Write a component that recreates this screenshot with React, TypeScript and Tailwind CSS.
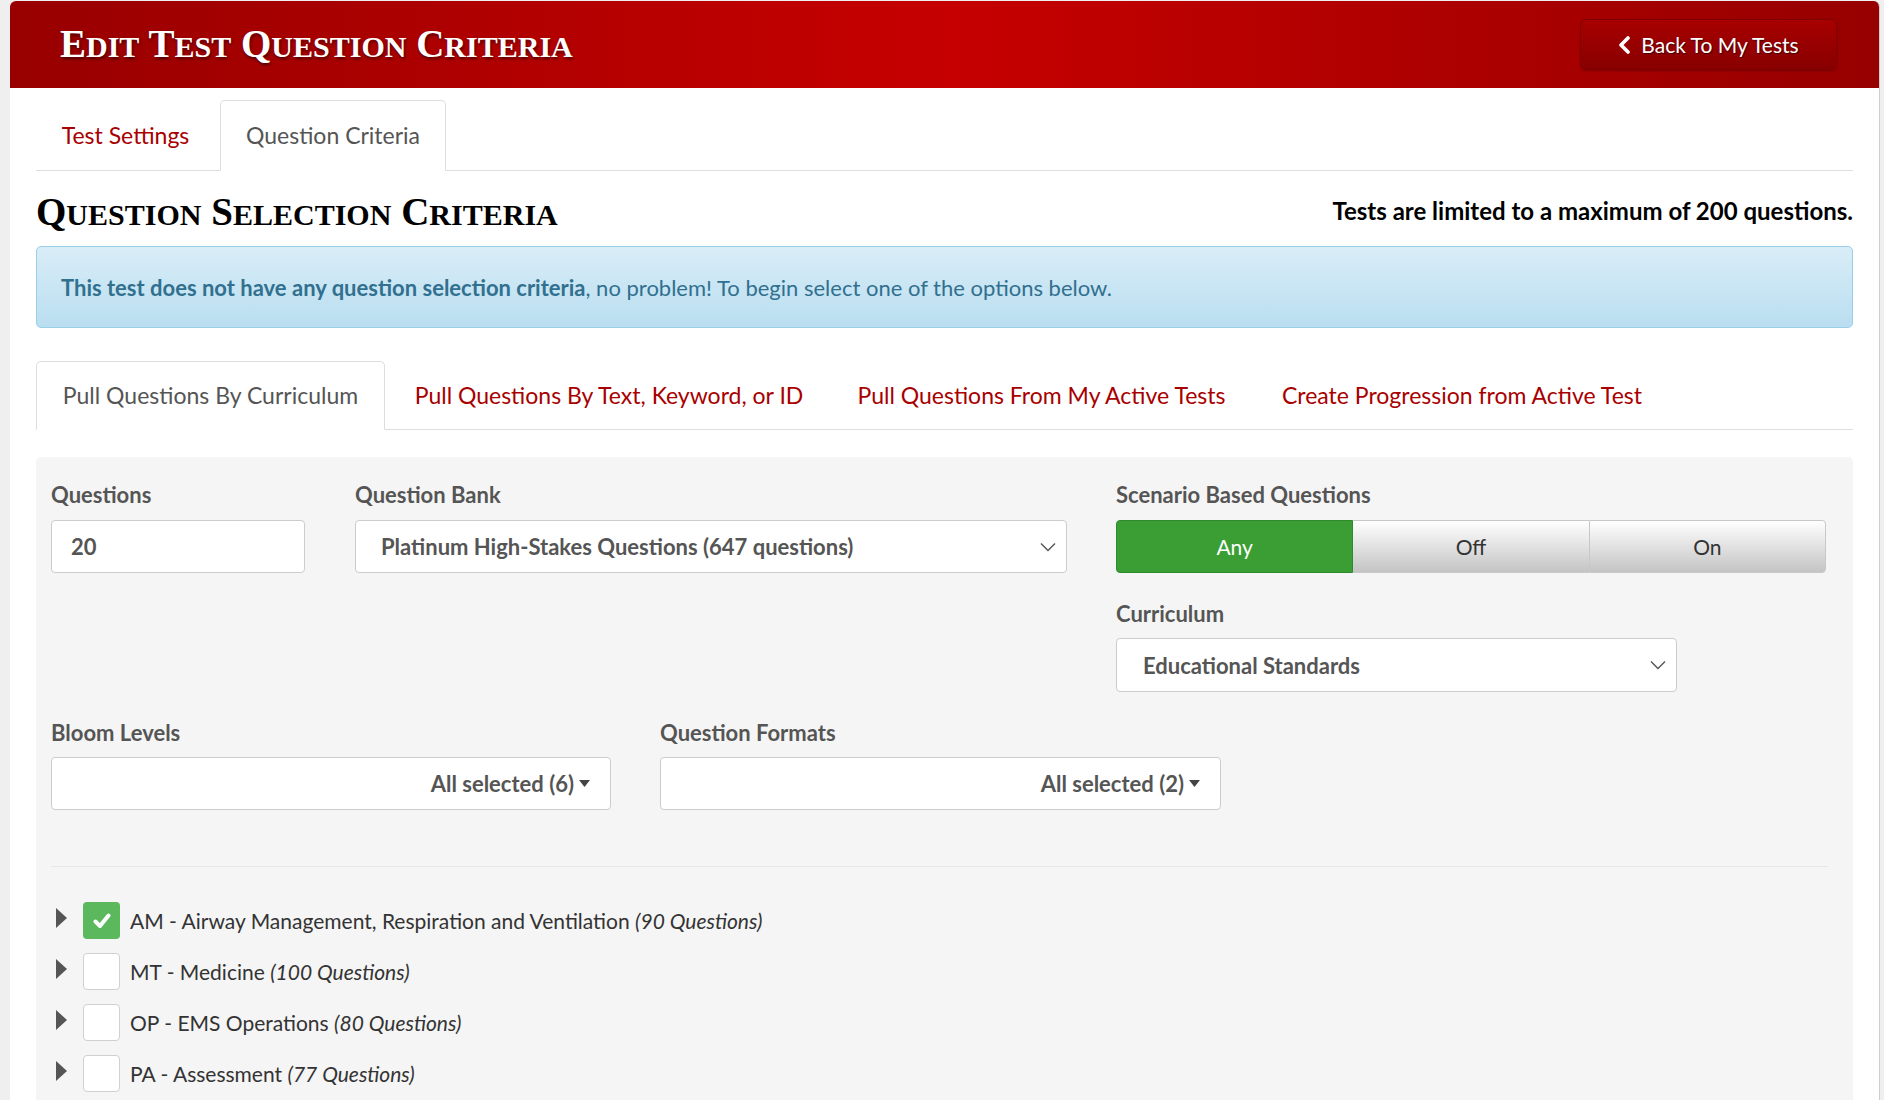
import React from "react";

const SC = ({ text }: { text: string }) => (
  <>
    {text.split(" ").map((w, i) => (
      <React.Fragment key={i}>
        {i > 0 && " "}
        <span>{w[0]}</span>
        <span className="text-[0.77em]">{w.slice(1).toUpperCase()}</span>
      </React.Fragment>
    ))}
  </>
);

const Chevron = () => (
  <svg width="16" height="10" viewBox="0 0 16 10" className="shrink-0">
    <polyline points="1,1.5 8,8.5 15,1.5" fill="none" stroke="#555" strokeWidth="1.4" />
  </svg>
);

const Caret = () => (
  <svg width="11" height="7" viewBox="0 0 11 7" className="ml-[5px] shrink-0">
    <polygon points="0,0 11,0 5.5,7" fill="#444" />
  </svg>
);

const TreeRow = ({ checked, label, count }: { checked: boolean; label: string; count: string }) => (
  <div className="h-[51px] flex items-center">
    <svg width="11" height="20" viewBox="0 0 11 20" className="ml-[5px] -mt-[6px] shrink-0">
      <polygon points="0,0 11,10 0,20" fill="#555" />
    </svg>
    {checked ? (
      <div className="ml-[16px] w-[37px] h-[37px] rounded-[4px] bg-[#5cb85c] flex items-center justify-center shrink-0">
        <svg width="18" height="16" viewBox="0 0 18 16">
          <path d="M2.5 8.5 L7 13 L15.5 2.5" fill="none" stroke="white" strokeWidth="4" strokeLinecap="round" strokeLinejoin="round" />
        </svg>
      </div>
    ) : (
      <div className="ml-[16px] w-[37px] h-[37px] rounded-[4px] bg-white border border-[#d0d0d0] shrink-0" />
    )}
    <span className="ml-[10px] text-[21px] text-[#333]">
      {label} <i>{count}</i>
    </span>
  </div>
);

const Label = ({ children, className = "" }: { children: React.ReactNode; className?: string }) => (
  <div className={"h-[24px] leading-[24px] text-[22px] font-bold text-[#555] " + className}>{children}</div>
);

export default function App() {
  return (
    <div className="h-screen overflow-hidden bg-[#efefef] pl-[10px] pr-[4px] pt-[1px] font-['Lato',sans-serif]">
      <div className="bg-white rounded-t-[6px] border-r border-[#cfcfcf] h-[1099px] overflow-hidden">
        <header className="h-[87px] flex items-center justify-between pl-[50px] pr-[42px] bg-[linear-gradient(90deg,#980000_0%,#c60000_50%,#970000_100%)]">
          <h1 className="font-['Liberation_Serif',serif] font-bold text-[39px] text-white leading-none -mt-[2px] [text-shadow:1px_2px_3px_rgba(0,0,0,0.55)]">
            <SC text="Edit Test Question Criteria" />
          </h1>
          <button className="w-[257px] h-[51px] rounded-[6px] border border-[#800000] bg-[linear-gradient(180deg,#a80000_0%,#880000_100%)] shadow-[0_1px_2px_rgba(0,0,0,0.25)] flex items-center justify-center text-white text-[21px] [text-shadow:1px_1px_1px_rgba(0,0,0,0.6)]">
            <svg width="13" height="18" viewBox="0 0 13 18" className="mr-[10px]">
              <polyline points="10,2 3,9 10,16" fill="none" stroke="white" strokeWidth="3.6" strokeLinecap="round" strokeLinejoin="round" />
            </svg>
            Back To My Tests
          </button>
        </header>

        <div className="mx-[26px]">
          <div className="mt-[13px] h-[70px] flex items-end border-b border-[#ddd] text-[23px]">
            <div className="w-[179px] h-[70px] mr-[5px] flex items-center justify-center text-[#a80000]">Test Settings</div>
            <div className="w-[226px] h-[71px] -mb-px flex items-center justify-center text-[#555] bg-white border border-[#ddd] border-b-white rounded-t-[5px]">Question Criteria</div>
          </div>

          <div className="mt-[15px] h-[50px] flex items-center justify-between">
            <h2 className="font-['Liberation_Serif',serif] font-bold text-[39px] text-black leading-none">
              <SC text="Question Selection Criteria" />
            </h2>
            <div className="font-bold text-[24px] text-black">Tests are limited to a maximum of 200 questions.</div>
          </div>

          <div className="mt-[10px] h-[82px] px-[24px] flex items-center rounded-[5px] border border-[#9acfea] bg-[linear-gradient(180deg,#d9edf7_0%,#b9def0_100%)] text-[#31708f] text-[22px]">
            <span>
              <b>This test does not have any question selection criteria</b>, no problem! To begin select one of the options below.
            </span>
          </div>

          <div className="mt-[34px] h-[68px] flex items-end border-b border-[#ddd] text-[23px]">
            <div className="w-[349px] h-[69px] -mb-px mr-[6px] flex items-center justify-center text-[#555] bg-white border border-[#ddd] border-b-white rounded-t-[5px]">Pull Questions By Curriculum</div>
            <div className="w-[436px] h-[68px] mr-[6px] flex items-center justify-center text-[#a80000]">Pull Questions By Text, Keyword, or ID</div>
            <div className="w-[417px] h-[68px] mr-[6px] flex items-center justify-center text-[#a80000]">Pull Questions From My Active Tests</div>
            <div className="w-[412px] h-[68px] flex items-center justify-center text-[#a80000]">Create Progression from Active Test</div>
          </div>

          <div className="mt-[27px] bg-[#f5f5f5] rounded-t-[5px] pl-[15px] pr-[25px] pt-[26px] h-[800px]">
            <div className="flex items-start">
              <div className="w-[254px]">
                <Label>Questions</Label>
                <div className="mt-[13px] h-[53px] bg-white border border-[#ccc] rounded-[4px] px-[19px] flex items-center text-[22px] font-bold text-[#555]">20</div>
              </div>
              <div className="ml-[50px] w-[712px]">
                <Label>Question Bank</Label>
                <div className="mt-[13px] h-[53px] bg-white border border-[#ccc] rounded-[4px] pl-[25px] pr-[10px] flex items-center justify-between text-[22px] font-bold text-[#555]">
                  <span>Platinum High-Stakes Questions (647 questions)</span>
                  <Chevron />
                </div>
              </div>
              <div className="ml-[49px] w-[710px]">
                <Label>Scenario Based Questions</Label>
                <div className="mt-[13px] h-[53px] flex text-[21px]">
                  <div className="flex-1 flex items-center justify-center bg-[#3a9e35] border border-[#2f8a2b] rounded-l-[4px] text-white">Any</div>
                  <div className="flex-1 flex items-center justify-center bg-[linear-gradient(180deg,#ffffff_0%,#c4c4c4_100%)] border-y border-[#c8c8c8] text-[#333]">Off</div>
                  <div className="flex-1 flex items-center justify-center bg-[linear-gradient(180deg,#ffffff_0%,#c4c4c4_100%)] border border-[#c8c8c8] rounded-r-[4px] text-[#333]">On</div>
                </div>
                <Label className="mt-[29px]">Curriculum</Label>
                <div className="mt-[12px] w-[561px] h-[54px] bg-white border border-[#ccc] rounded-[4px] pl-[26px] pr-[10px] flex items-center justify-between text-[22px] font-bold text-[#555]">
                  <span>Educational Standards</span>
                  <Chevron />
                </div>
              </div>
            </div>

            <div className="mt-[29px] flex items-start">
              <div className="w-[560px]">
                <Label>Bloom Levels</Label>
                <div className="mt-[12px] h-[53px] bg-white border border-[#ccc] rounded-[4px] pr-[20px] flex items-center justify-end text-[22px] font-bold text-[#555]">
                  All selected (6)
                  <Caret />
                </div>
              </div>
              <div className="ml-[49px] w-[561px]">
                <Label>Question Formats</Label>
                <div className="mt-[12px] h-[53px] bg-white border border-[#ccc] rounded-[4px] pr-[20px] flex items-center justify-end text-[22px] font-bold text-[#555]">
                  All selected (2)
                  <Caret />
                </div>
              </div>
            </div>

            <div className="mt-[56px] h-px bg-[#e6e6e6]" />

            <div className="mt-[28px]">
              <TreeRow checked label="AM - Airway Management, Respiration and Ventilation" count="(90 Questions)" />
              <TreeRow checked={false} label="MT - Medicine" count="(100 Questions)" />
              <TreeRow checked={false} label="OP - EMS Operations" count="(80 Questions)" />
              <TreeRow checked={false} label="PA - Assessment" count="(77 Questions)" />
            </div>
          </div>
        </div>
      </div>
    </div>
  );
}
